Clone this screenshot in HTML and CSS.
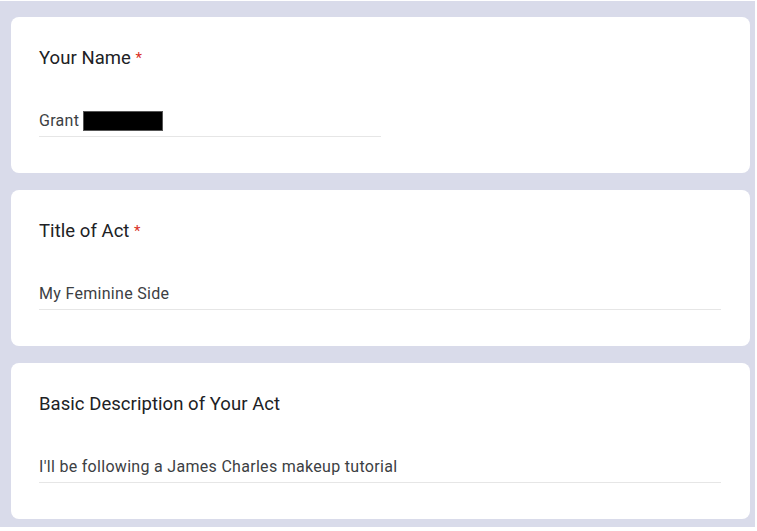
FILE: index.html
```html
<!DOCTYPE html>
<html>
<head>
<meta charset="utf-8">
<link rel="stylesheet" href="styles.css">
</head>
<body>
<div class="page">
  <div class="card">
    <div class="title">Your Name <span class="req">*</span></div>
    <div class="field short"><span class="val">Grant</span><span class="redact"></span></div>
  </div>
  <div class="card">
    <div class="title">Title of Act <span class="req">*</span></div>
    <div class="field"><span class="val">My Feminine Side</span></div>
  </div>
  <div class="card">
    <div class="title">Basic Description of Your Act</div>
    <div class="field"><span class="val">I'll be following a James Charles makeup tutorial</span></div>
  </div>
</div>
</body>
</html>
```
FILE: styles.css
```css
html, body {
  margin: 0;
  padding: 0;
  background: #ffffff;
}
body {
  font-family: Roboto, "Liberation Sans", Arial, sans-serif;
  color: #202124;
}
.page {
  margin-top: 1px;
  width: 755px;
  height: 526px;
  box-sizing: border-box;
  background: #d9dbea;
  padding: 16px 5px 0 11px;
  display: flex;
  flex-direction: column;
  gap: 17px;
}
.card {
  background: #ffffff;
  border-radius: 8px;
  height: 156px;
  box-sizing: border-box;
  padding: 29px 29px 0 28px;
}
.title {
  font-size: 18.5px;
  line-height: 24px;
  height: 24px;
  color: #202124;
  letter-spacing: 0.05px;
}
.req {
  color: #d93025;
  font-size: 15px;
  vertical-align: top;
}
.field {
  margin-top: 41px;
  font-size: 16px;
  letter-spacing: 0.3px;
  line-height: 20px;
  height: 20px;
  color: #3c4043;
  padding-bottom: 5px;
  border-bottom: 1px solid #e6e6e6;
  display: flex;
  align-items: center;
}
.field.short {
  width: 342px;
}
.redact {
  display: inline-block;
  width: 78px;
  height: 18px;
  background: #000;
  border: 1px solid #555;
  margin-left: 4px;
}
```
